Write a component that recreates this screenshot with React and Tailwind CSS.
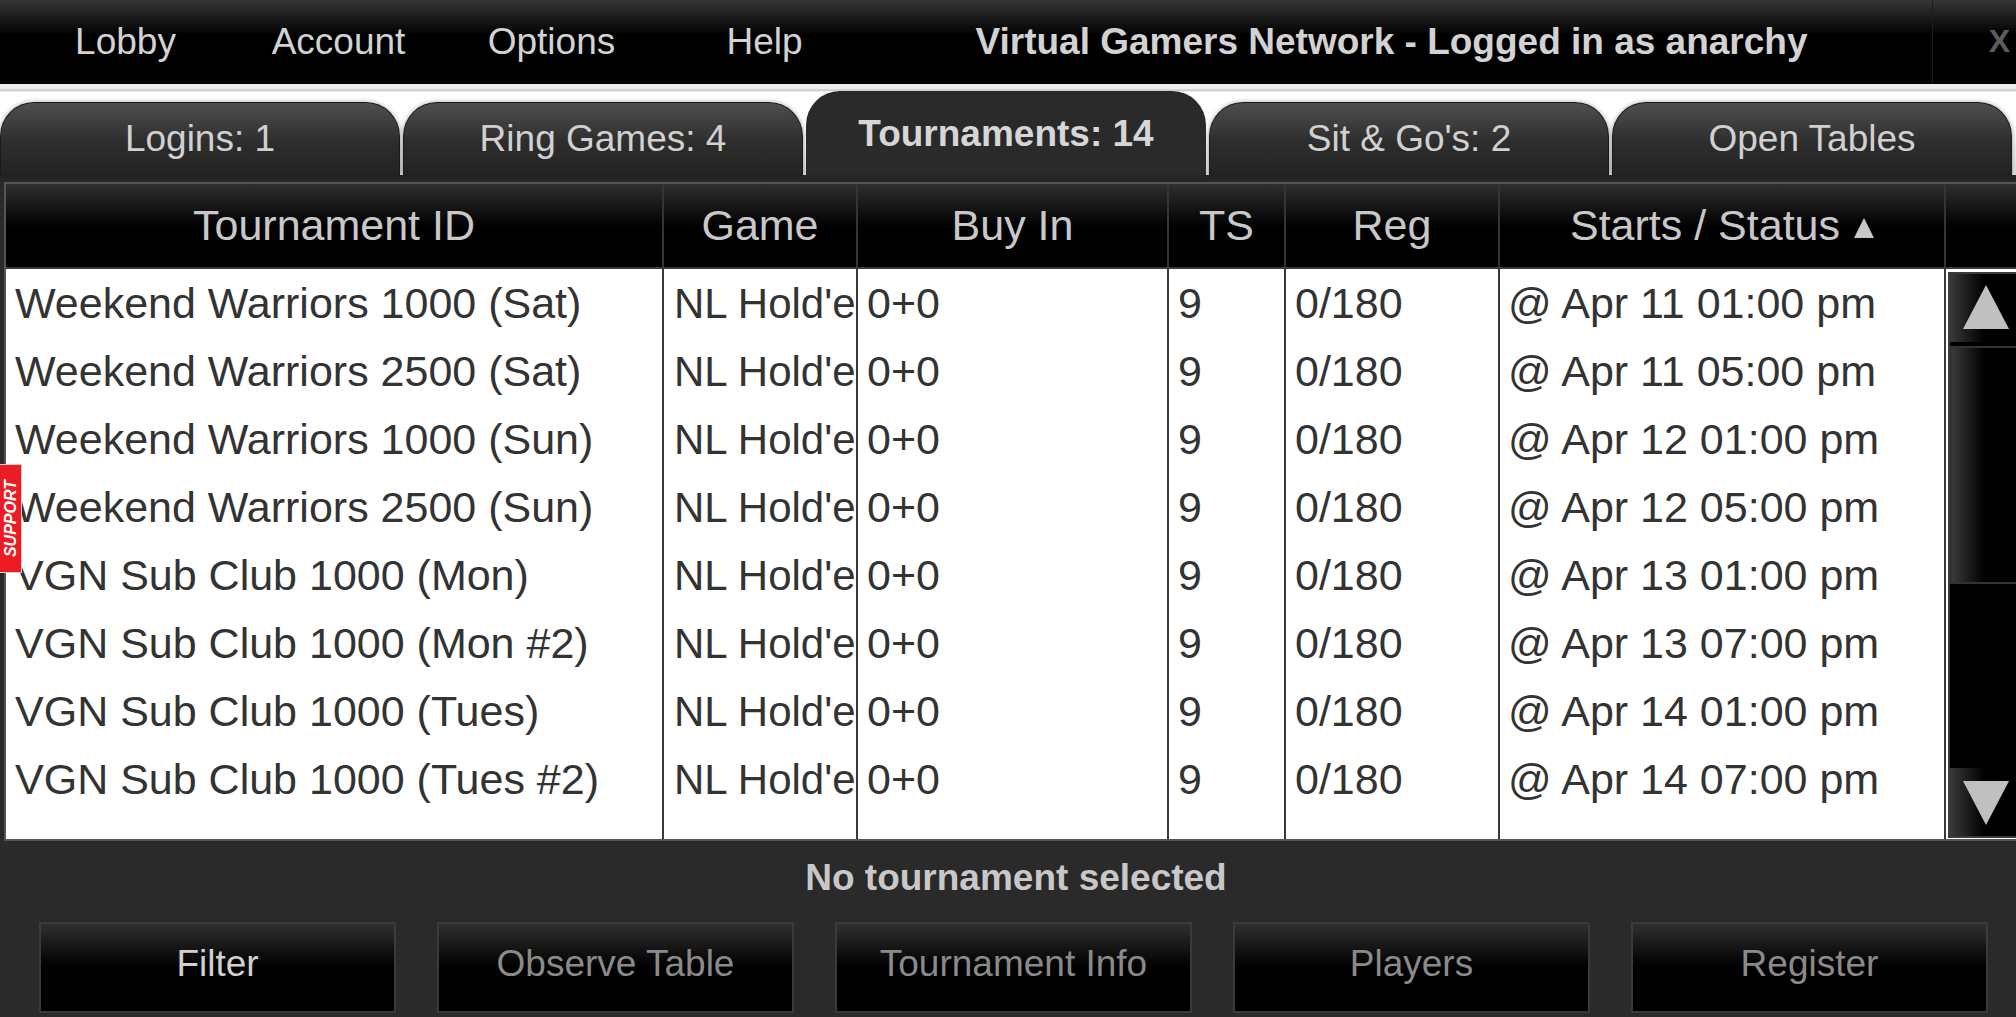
const menu = ['Lobby', 'Account', 'Options', 'Help'];

const tabs = [
  { label: 'Logins: 1' },
  { label: 'Ring Games: 4' },
  { label: 'Tournaments: 14', active: true },
  { label: "Sit & Go's: 2" },
  { label: 'Open Tables' },
];

const columns = [
  { key: 'name', title: 'Tournament ID', w: 'w-[656px]', pad: 'pl-[9px]' },
  { key: 'game', title: 'Game', w: 'w-[194px]', pad: 'pl-[10px] text-[42px]' },
  { key: 'buyin', title: 'Buy In', w: 'w-[311px]', pad: 'pl-[9px]' },
  { key: 'ts', title: 'TS', w: 'w-[117px]', pad: 'pl-[9px]' },
  { key: 'reg', title: 'Reg', w: 'w-[214px]', pad: 'pl-[9px]' },
  { key: 'starts', title: 'Starts / Status', w: 'w-[446px]', pad: 'pl-[8px]', sorted: true },
];

const rows = [
  ['Weekend Warriors 1000 (Sat)', '@ Apr 11 01:00 pm'],
  ['Weekend Warriors 2500 (Sat)', '@ Apr 11 05:00 pm'],
  ['Weekend Warriors 1000 (Sun)', '@ Apr 12 01:00 pm'],
  ['Weekend Warriors 2500 (Sun)', '@ Apr 12 05:00 pm'],
  ['VGN Sub Club 1000 (Mon)', '@ Apr 13 01:00 pm'],
  ['VGN Sub Club 1000 (Mon #2)', '@ Apr 13 07:00 pm'],
  ['VGN Sub Club 1000 (Tues)', '@ Apr 14 01:00 pm'],
  ['VGN Sub Club 1000 (Tues #2)', '@ Apr 14 07:00 pm'],
].map(([name, starts]) => ({ name, game: "NL Hold'em", buyin: '0+0', ts: '9', reg: '0/180', starts }));

const buttons = [
  { label: 'Filter', enabled: true },
  { label: 'Observe Table' },
  { label: 'Tournament Info' },
  { label: 'Players' },
  { label: 'Register' },
];

function Arrow({ down }) {
  return (
    <svg width="46" height="46" viewBox="0 0 46 46">
      <polygon points={down ? '0,2 46,2 23,46' : '23,0 46,44 0,44'} fill="#c0c0c0" />
    </svg>
  );
}

function ScrollBar() {
  return (
    <div className="ml-[2px] mt-[3px] h-[566px] w-[80px] border-2 border-[#3c3c3c] bg-black flex flex-col">
      <div className="h-[68px] flex items-center pl-[13px] bg-[linear-gradient(to_right,#3a3a3a,#000_45%)]">
        <Arrow />
      </div>
      <div className="mt-[4px] h-[238px] border-2 border-[#333] bg-[linear-gradient(to_right,#3a3a3a,#000_45%)]" />
      <div className="flex-1" />
      <div className="h-[68px] flex items-center pl-[13px] bg-[linear-gradient(to_right,#3a3a3a,#000_45%)]">
        <Arrow down />
      </div>
    </div>
  );
}

export default function App() {
  return (
    <div className="relative w-[2016px] h-[1017px] overflow-hidden bg-[#2a2a2a] font-['Liberation_Sans',Arial,sans-serif]">
      {/* top bar */}
      <div className="h-[84px] flex bg-[linear-gradient(to_bottom,#363636,#000_42%)] text-[#d2d2d2]">
        <div className="flex pl-[19px]">
          {menu.map(m => (
            <div key={m} className="w-[213px] flex items-center justify-center text-[37px]">{m}</div>
          ))}
        </div>
        <div className="flex-1 flex items-center justify-center pr-[20px] text-[37px] font-bold">
          Virtual Gamers Network - Logged in as anarchy
        </div>
        <div className="w-[84px] shrink-0 border-l border-[#1c1c1c] flex items-center justify-end pr-[6px] pb-[2px] text-[32px] font-bold text-[#5c5c5c]">X</div>
      </div>

      {/* tabs */}
      <div className="h-[91px] flex items-end gap-[3px] bg-[linear-gradient(to_bottom,#ececec_0px,#ececec_5px,#bdbdbd_6px,#ffffff_8px,#ffffff_40px,#dcdcdc)]">
        {tabs.map(t => (
          <div
            key={t.label}
            className={t.active
              ? 'w-[400px] h-[84px] rounded-t-[34px] bg-[#2a2a2a] flex items-center justify-center pt-[2px] text-[37px] font-bold text-[#d6d6d6]'
              : 'w-[400px] h-[73px] rounded-t-[34px] border border-b-0 border-[#1a1a1a] bg-[linear-gradient(to_bottom,#4e4e4e,#2d2d2d_55%,#232323)] shadow-[0_0_5px_rgba(0,0,0,0.35)] flex items-center justify-center text-[37px] text-[#d0d0d0]'}
          >
            {t.label}
          </div>
        ))}
      </div>
      <div className="h-[7px] bg-[#262626]" />

      {/* table */}
      <div className="ml-[4px] w-[2040px] border-2 border-[#555]">
        <div className="flex h-[85px] border-b-2 border-[#3a3a3a] bg-[linear-gradient(to_bottom,#2f2f2f,#000_52%)] text-[43px] text-[#c8c8c8]">
          {columns.map((c, i) => (
            <div key={c.key} className={`${c.w} shrink-0 flex items-center justify-center ${i > 0 ? 'border-l-2 border-[#353535]' : ''}`}>
              {c.title}
              {c.sorted && (
                <svg className="ml-[14px] mt-[4px]" width="20" height="20" viewBox="0 0 20 20">
                  <polygon points="10,0 20,20 0,20" fill="#c8c8c8" />
                </svg>
              )}
            </div>
          ))}
          <div className="flex-1 border-l-2 border-[#353535]" />
        </div>
        <div className="flex h-[570px] bg-white text-[43px] text-[#333]">
          {columns.map((c, i) => (
            <div key={c.key} className={`${c.w} shrink-0 overflow-hidden ${i > 0 ? 'border-l-2 border-[#3a3a3a]' : ''}`}>
              {rows.map(r => (
                <div key={r.name} className={`h-[68px] flex items-center whitespace-nowrap ${c.pad}`}>{r[c.key]}</div>
              ))}
            </div>
          ))}
          <div className="flex-1 border-l-2 border-[#3a3a3a]">
            <ScrollBar />
          </div>
        </div>
      </div>

      {/* footer */}
      <div className="pt-[16px] pl-[16px] text-center text-[37px] leading-[42px] font-bold text-[#c8c8c8]">No tournament selected</div>
      <div className="mt-[23px] flex gap-[41px] pl-[39px]">
        {buttons.map(b => (
          <div
            key={b.label}
            className={`w-[357px] h-[91px] shrink-0 border-2 border-[#3a3a3a] bg-[linear-gradient(to_bottom,#2f2f2f,#000_50%)] flex items-center justify-center pb-[7px] text-[37px] ${b.enabled ? 'text-[#d0d0d0]' : 'text-[#8a8a8a]'}`}
          >
            {b.label}
          </div>
        ))}
      </div>

      {/* support tab */}
      <div className="absolute left-0 top-[464px] w-[22px] h-[109px] bg-[#ed1c24] border border-l-0 border-[#cfcfcf] flex items-center justify-center">
        <span className="[writing-mode:vertical-rl] rotate-180 text-[16px] font-bold italic text-white">SUPPORT</span>
      </div>
    </div>
  );
}
